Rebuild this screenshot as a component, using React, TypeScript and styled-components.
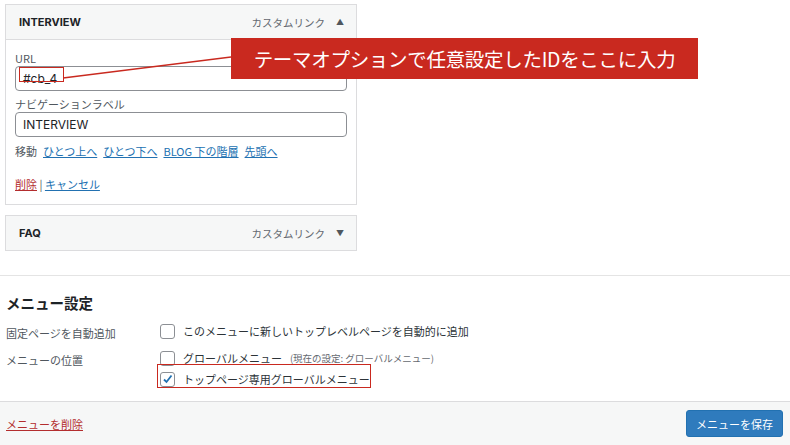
import React from "react";
import styled, { createGlobalStyle } from "styled-components";

const G = createGlobalStyle`
  body { margin:0; background:#fff; font-family: "Noto Sans CJK JP", "Noto Sans", sans-serif; color:#1d2327; }
`;
const Page = styled.div`position:relative;width:790px;height:445px;overflow:hidden;background:#fff;`;
const Top = styled.div`padding:4px 0 0 5px;height:276px;border-bottom:1px solid #e4e4e4;box-sizing:border-box;`;
const Panel = styled.div`width:352px;border:1px solid #dcdcde;box-sizing:border-box;margin-bottom:${p => p.$mb || 0}px;`;
const Head = styled.div`height:34px;background:#f6f7f7;display:flex;align-items:center;padding:0 12px 0 13px;font-size:11px;font-weight:700;font-family:"Inter","Noto Sans CJK JP",sans-serif;border-bottom:${p => p.$open ? "1px solid #dcdcde" : "none"};`;
const HeadRight = styled.span`margin-left:auto;font-weight:400;color:#646970;font-size:10.5px;display:flex;gap:11px;align-items:center;`;
const Arrow = styled.span`font-size:8px;color:#50575e;`;
const Body = styled.div`padding:11px 9px 12px 9px;font-size:11px;`;
const Label = styled.div`color:#50575e;font-size:11px;line-height:14px;`;
const Input = styled.div`height:23px;border:1px solid #8c8f94;border-radius:4px;margin:1px 0 6px;display:flex;align-items:center;padding-left:7px;font-size:12px;font-family:"Inter",sans-serif;`;
const Move = styled.div`display:flex;gap:6px;margin-top:4px;color:#50575e;`;
const A = styled.a`color:${p => p.$red ? "#b32d2e" : "#2271b1"};text-decoration:underline;`;
const Actions = styled.div`margin-top:17px;color:#50575e;`;
const H2 = styled.div`font-size:14.5px;font-weight:700;padding:16px 0 0 6px;`;
const Row = styled.div`display:flex;font-size:11px;padding-left:6px;min-height:${p => p.$h}px;`;
const RowLabel = styled.div`width:154px;color:#50575e;padding-top:2px;`;
const Opts = styled.div`display:flex;flex-direction:column;gap:5px;`;
const Opt = styled.label`display:flex;align-items:center;gap:8px;font-size:11px;color:#2c3338;`;
const Box = styled.span`width:13px;height:13px;border:1px solid #8c8f94;border-radius:3px;display:inline-flex;align-items:center;justify-content:center;background:#fff;`;
const Small = styled.span`font-size:9.5px;color:#646970;`;
const Footer = styled.div`position:absolute;left:0;right:0;top:401px;bottom:0;background:#f6f7f7;border-top:1px solid #dcdcde;display:flex;align-items:center;justify-content:space-between;padding:0 7px 0 6px;font-size:11px;`;
const Btn = styled.div`background:#2f7bbd;color:#fff;border-radius:3px;width:97px;height:27px;display:flex;align-items:center;justify-content:center;font-size:11px;border:1px solid #2271b1;box-sizing:border-box;`;
const Callout = styled.div`position:absolute;left:231px;top:38px;width:467px;height:41px;background:#c9291f;color:#fff;font-size:19.5px;display:flex;align-items:center;justify-content:center;white-space:nowrap;letter-spacing:-0.3px;`;
const Frame = styled.div`position:absolute;border:1.5px solid #c9291f;box-sizing:border-box;`;
const Line = styled.svg`position:absolute;left:0;top:0;`;

export default function App() {
  return (
    <Page>
      <G />
      <Top>
        <Panel $mb={10}>
          <Head $open>INTERVIEW<HeadRight>カスタムリンク<Arrow>▲</Arrow></HeadRight></Head>
          <Body>
            <Label>URL</Label>
            <Input>#cb_4</Input>
            <Label>ナビゲーションラベル</Label>
            <Input>INTERVIEW</Input>
            <Move>移動 <A>ひとつ上へ</A><A>ひとつ下へ</A><A>BLOG 下の階層</A><A>先頭へ</A></Move>
            <Actions><A $red>削除</A> | <A>キャンセル</A></Actions>
          </Body>
        </Panel>
        <Panel>
          <Head>FAQ<HeadRight>カスタムリンク<Arrow>▼</Arrow></HeadRight></Head>
        </Panel>
      </Top>
      <H2>メニュー設定</H2>
      <Row $h={27} style={{ marginTop: 10 }}>
        <RowLabel>固定ページを自動追加</RowLabel>
        <Opts><Opt><Box />このメニューに新しいトップレベルページを自動的に追加</Opt></Opts>
      </Row>
      <Row $h={40}>
        <RowLabel>メニューの位置</RowLabel>
        <Opts>
          <Opt><Box />グローバルメニュー <Small>(現在の設定: グローバルメニュー)</Small></Opt>
          <Opt><Box><svg width="11" height="11" viewBox="0 0 11 11"><path d="M2 5.5 L4.5 8 L9.5 1.5" stroke="#2271b1" strokeWidth="1.8" fill="none" /></svg></Box>トップページ専用グローバルメニュー</Opt>
        </Opts>
      </Row>
      <Footer><A $red>メニューを削除</A><Btn>メニューを保存</Btn></Footer>
      <Line width="790" height="445"><line x1="63" y1="78" x2="231" y2="57" stroke="#c9291f" strokeWidth="1.5" /></Line>
      <Frame style={{ left: 19, top: 67, width: 45, height: 15 }} />
      <Frame style={{ left: 157, top: 364, width: 214, height: 24 }} />
      <Callout>テーマオプションで任意設定したIDをここに入力</Callout>
    </Page>
  );
}
